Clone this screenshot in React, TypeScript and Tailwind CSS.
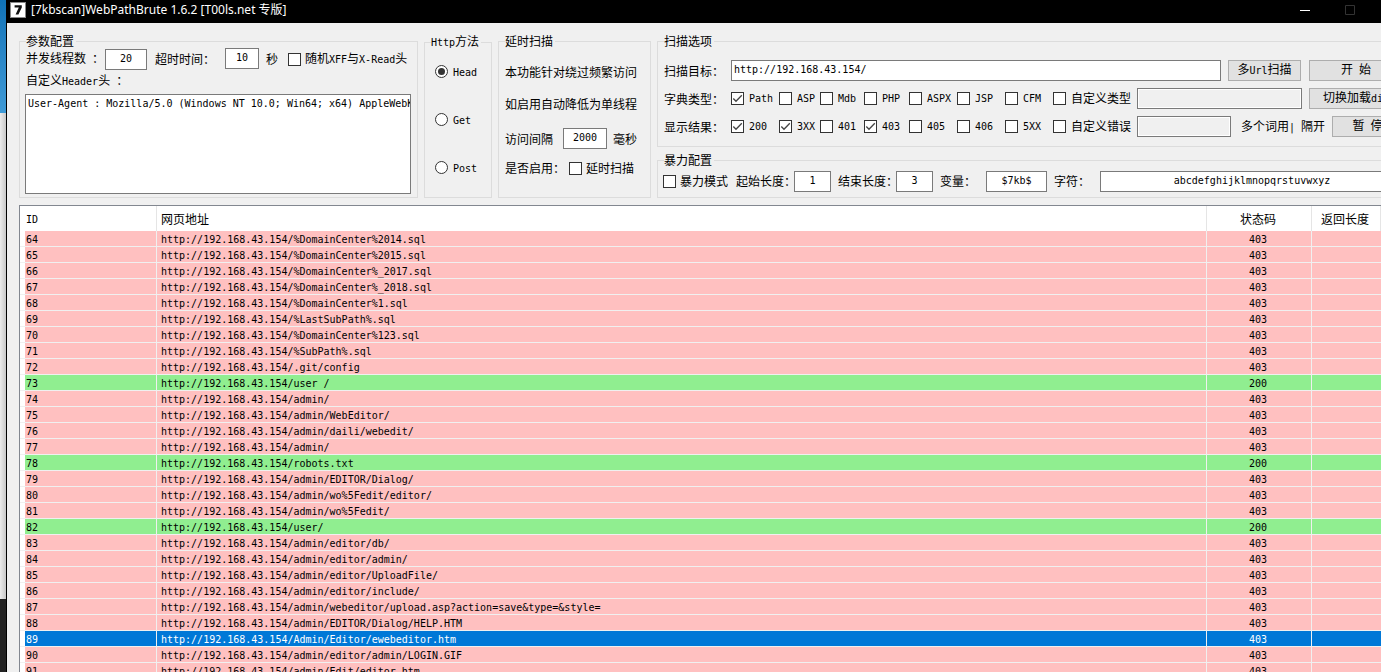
import React from "react";

const CJK = "font-['Noto_Sans_CJK_SC',sans-serif]";
const LATIN = "font-['DejaVu_Sans_Mono','Noto_Sans_CJK_SC',monospace] text-[10px]";

function Txt({ children }: { children: string }) {
  const runs = children.match(/[\x20-\x7e]+|[^\x20-\x7e]+/g) ?? [];
  return (
    <span className="whitespace-pre">
      {runs.map((run, i) =>
        /^[\x20-\x7e]/.test(run) ? (
          <span key={i} className={LATIN}>{run}</span>
        ) : (
          <React.Fragment key={i}>{run}</React.Fragment>
        ),
      )}
    </span>
  );
}

function Check({ label, checked = false, tight = false }: { label: string; checked?: boolean; tight?: boolean }) {
  return (
    <label className={tight ? "flex items-center gap-1" : "flex items-center gap-[5px]"}>
      <span className="grid shrink-0">
        <input
          type="checkbox"
          defaultChecked={checked}
          className="peer col-start-1 row-start-1 size-[13px] appearance-none border border-[#333333] bg-white"
        />
        <svg
          viewBox="0 0 13 13"
          className="pointer-events-none invisible col-start-1 row-start-1 size-[13px] peer-checked:visible"
        >
          <path d="M2.3 6.5 5 9.3 10.8 3.3" fill="none" stroke="#444" strokeWidth="1.3" />
        </svg>
      </span>
      <span className="pb-[2px]"><Txt>{label}</Txt></span>
    </label>
  );
}

function Method({ label, checked = false }: { label: string; checked?: boolean }) {
  return (
    <label className="flex h-4 items-center gap-[5px]">
      <span className="grid shrink-0">
        <input
          type="radio"
          name="method"
          defaultChecked={checked}
          className="peer col-start-1 row-start-1 size-[13px] appearance-none rounded-full border border-[#333333] bg-white"
        />
        <span className="pointer-events-none invisible col-start-1 row-start-1 size-[7px] place-self-center rounded-full bg-[#333333] peer-checked:visible" />
      </span>
      <Txt>{label}</Txt>
    </label>
  );
}

const FIELD = `h-[21px] min-w-0 shrink-0 border border-[#7a7a7a] bg-white pb-[2px] ${LATIN}`;
const BUTTON = "h-[21px] shrink-0 border border-[#adadad] bg-[#e1e1e1] pb-[2px]";
const GROUP = "min-w-0 border border-[#dcdcdc]";
const LEGEND = "pr-[2px] pb-[2px] leading-[11px]";

const BASE = "http://192.168.43.154/";
const results: [number, string, number][] = [
  [64, "%DomainCenter%2014.sql", 403],
  [65, "%DomainCenter%2015.sql", 403],
  [66, "%DomainCenter%_2017.sql", 403],
  [67, "%DomainCenter%_2018.sql", 403],
  [68, "%DomainCenter%1.sql", 403],
  [69, "%LastSubPath%.sql", 403],
  [70, "%DomainCenter%123.sql", 403],
  [71, "%SubPath%.sql", 403],
  [72, ".git/config", 403],
  [73, "user /", 200],
  [74, "admin/", 403],
  [75, "admin/WebEditor/", 403],
  [76, "admin/daili/webedit/", 403],
  [77, "admin/", 403],
  [78, "robots.txt", 200],
  [79, "admin/EDITOR/Dialog/", 403],
  [80, "admin/wo%5Fedit/editor/", 403],
  [81, "admin/wo%5Fedit/", 403],
  [82, "user/", 200],
  [83, "admin/editor/db/", 403],
  [84, "admin/editor/admin/", 403],
  [85, "admin/editor/UploadFile/", 403],
  [86, "admin/editor/include/", 403],
  [87, "admin/webeditor/upload.asp?action=save&type=&style=", 403],
  [88, "admin/EDITOR/Dialog/HELP.HTM", 403],
  [89, "Admin/Editor/ewebeditor.htm", 403],
  [90, "admin/editor/admin/LOGIN.GIF", 403],
  [91, "admin/Edit/editor.htm", 403],
];
const SELECTED = 89;

function rowTone(id: number, status: number) {
  if (id === SELECTED) return "bg-[#0078d7] text-white";
  return status === 200 ? "bg-[#90ee90]" : "bg-[#ffc0c0]";
}

function TitleBar() {
  return (
    <header className="flex h-[23px] items-center bg-black pl-[3px] text-white">
      <svg viewBox="0 0 16 16" className="mb-[3px] size-4 shrink-0">
        <rect x="0.5" y="0.5" width="15" height="15" fill="#fff" stroke="#888" />
        <path d="M4.6 3.2h7.2v2.2L8.4 12.6H5.6L8.8 5.6H4.6z" fill="#111" />
      </svg>
      <h1 className="ml-[5px] mb-[3px] flex-1 whitespace-nowrap font-['Noto_Sans','Noto_Sans_CJK_SC',sans-serif] text-[12px] leading-4">
        [7kbscan]WebPathBrute 1.6.2 [T00ls.net 专版]
      </h1>
      <button aria-label="最小化" className="mb-[3px] flex h-4 w-[45px] items-center justify-center">
        <svg viewBox="0 0 10 10" className="size-[10px]"><path d="M0 5.5h10" stroke="#fff" /></svg>
      </button>
      <button aria-label="最大化" className="mb-[3px] mr-[9px] flex h-4 w-[45px] items-center justify-center">
        <svg viewBox="0 0 10 10" className="size-[10px]"><path d="M.5.5h9v9h-9z" fill="none" stroke="#333" /></svg>
      </button>
    </header>
  );
}

function Parameters() {
  return (
    <fieldset className={`${GROUP} w-[399px] shrink-0 px-[5px]`}>
      <legend className={`${LEGEND} ml-px`}>参数配置</legend>
      <div className="flex h-[22px] items-center pl-px">
        <label htmlFor="threads" className="w-[79px] pb-[2px]"><Txt>并发线程数 ：</Txt></label>
        <input id="threads" defaultValue="20" className={`${FIELD} w-[42px] text-center`} />
        <label htmlFor="timeout" className="ml-2 w-[70px] pb-[2px]">超时时间：</label>
        <input id="timeout" defaultValue="10" className={`${FIELD} mb-[2px] w-[34px] text-center`} />
        <span className="mx-[7px] w-[15px] pb-[2px]">秒</span>
        <Check label="随机XFF与X-Read头" tight />
      </div>
      <label htmlFor="headers" className="mt-[3px] mb-[6px] block pl-px"><Txt>自定义Header头 ：</Txt></label>
      <textarea
        id="headers"
        wrap="off"
        defaultValue="User-Agent : Mozilla/5.0 (Windows NT 10.0; Win64; x64) AppleWebKit/537.36"
        className={`block h-[100px] w-[386px] resize-none overflow-hidden border border-[#7a7a7a] bg-white px-[2px] py-[2px] ${LATIN} leading-[13px]`}
      />
    </fieldset>
  );
}

function Methods() {
  return (
    <fieldset className={`${GROUP} w-[68px] shrink-0 pl-[6px]`}>
      <legend className={LEGEND}><Txt>Http方法</Txt></legend>
      <div className="flex flex-col gap-8 pt-[13px] pl-[4px]">
        <Method label="Head" checked />
        <Method label="Get" />
        <Method label="Post" />
      </div>
    </fieldset>
  );
}

function Delay() {
  return (
    <fieldset className={`${GROUP} w-[153px] shrink-0 pl-[6px]`}>
      <legend className={LEGEND}>延时扫描</legend>
      <div className="flex flex-col pt-[17px]">
        <p className="h-8 whitespace-nowrap">本功能针对绕过频繁访问</p>
        <p className="h-[31px] whitespace-nowrap">如启用自动降低为单线程</p>
        <div className="flex h-[21px] items-center">
          <label htmlFor="interval" className="w-[58px] pb-px">访问间隔</label>
          <input id="interval" defaultValue="2000" className={`${FIELD} w-11 text-center`} />
          <span className="ml-[6px] pb-px">毫秒</span>
        </div>
        <div className="mt-[11px] flex h-4 items-center">
          <span className="w-16 pb-[2px]">是否启用：</span>
          <Check label="延时扫描" tight />
        </div>
      </div>
    </fieldset>
  );
}

const OPTION_ROW = "mt-[6px] grid h-[22px] grid-cols-[67px_48px_41px_44px_45px_48px_48px_48px_84px_auto] items-center";

function ScanOptions() {
  return (
    <fieldset className={`${GROUP} pb-[9px] pl-[6px]`}>
      <legend className={LEGEND}>扫描选项</legend>
      <div className="mt-[11px] flex h-[22px] items-center">
        <label htmlFor="target" className="w-[67px] shrink-0">扫描目标：</label>
        <input id="target" defaultValue="http://192.168.43.154/" className={`${FIELD} w-[490px] px-[2px]`} />
        <button className={`${BUTTON} ml-[7px] w-[73px]`}><Txt>多Url扫描</Txt></button>
        <button className={`${BUTTON} ml-2 w-[94px]`}><Txt>开 始</Txt></button>
      </div>
      <div className={OPTION_ROW}>
        <span>字典类型：</span>
        <Check label="Path" checked />
        <Check label="ASP" />
        <Check label="Mdb" />
        <Check label="PHP" />
        <Check label="ASPX" />
        <Check label="JSP" />
        <Check label="CFM" />
        <Check label="自定义类型" />
        <div className="flex items-center">
          <input aria-label="自定义类型" disabled className={`${FIELD} w-[165px] bg-[#f0f0f0]! shadow-[inset_0_0_0_1px_#fff]`} />
          <button className={`${BUTTON} ml-[7px] w-[94px]`}><Txt>切换加载dic</Txt></button>
        </div>
      </div>
      <div className={OPTION_ROW}>
        <span>显示结果：</span>
        <Check label="200" checked />
        <Check label="3XX" checked />
        <Check label="401" />
        <Check label="403" checked />
        <Check label="405" />
        <Check label="406" />
        <Check label="5XX" />
        <Check label="自定义错误" />
        <div className="flex items-center">
          <input aria-label="自定义错误" disabled className={`${FIELD} w-[94px] bg-[#f0f0f0]! shadow-[inset_0_0_0_1px_#fff]`} />
          <span className="ml-[10px] w-[91px] shrink-0"><Txt>多个词用| 隔开</Txt></span>
          <button className={`${BUTTON} w-[71px]`}><Txt>暂 停</Txt></button>
        </div>
      </div>
    </fieldset>
  );
}

function BruteOptions() {
  return (
    <fieldset className={`${GROUP} pb-[5px] pl-[5px]`}>
      <legend className={`${LEGEND} ml-px`}>暴力配置</legend>
      <div className="mt-[3px] flex h-[22px] items-center">
        <Check label="暴力模式" tight />
        <label htmlFor="minlen" className="ml-2 w-[58px] shrink-0 pb-[2px] whitespace-nowrap">起始长度：</label>
        <input id="minlen" defaultValue="1" className={`${FIELD} w-[37px] text-center`} />
        <label htmlFor="maxlen" className="ml-[7px] w-[58px] shrink-0 pb-[2px] whitespace-nowrap">结束长度：</label>
        <input id="maxlen" defaultValue="3" className={`${FIELD} w-[37px] text-center`} />
        <label htmlFor="variable" className="ml-[7px] w-[46px] shrink-0 pb-[2px]">变量：</label>
        <input id="variable" defaultValue="$7kb$" className={`${FIELD} w-[61px] text-center`} />
        <label htmlFor="charset" className="ml-[7px] w-[46px] shrink-0 pb-[2px]">字符：</label>
        <input id="charset" defaultValue="abcdefghijklmnopqrstuvwxyz" className={`${FIELD} w-[304px] text-center`} />
      </div>
    </fieldset>
  );
}

function Results() {
  const head = "border-r border-[#e5e5e5] font-normal";
  const cell = "border-r border-b border-[#f0f0f0] pt-[2px]";
  return (
    <div className="mt-[7px] ml-3 min-h-0 flex-1 overflow-hidden border-t border-l border-[#828790] bg-white">
      <table className="w-full table-fixed border-separate border-spacing-0">
        <colgroup>
          <col className="w-[5px]" />
          <col className="w-[132px]" />
          <col />
          <col className="w-[105px]" />
          <col className="w-[69px]" />
        </colgroup>
        <thead>
          <tr className="h-[25px]">
            <td />
            <th className={`${head} pl-px text-left`}><Txt>ID</Txt></th>
            <th className={`${head} pl-[4px] text-left`}>网页地址</th>
            <th className={`${head} pr-[2px]`}>状态码</th>
            <th className={`${head} pr-[2px]`}>返回长度</th>
          </tr>
        </thead>
        <tbody className={LATIN}>
          {results.map(([id, path, status]) => (
            <tr key={id} className="h-4">
              <td className="border-b border-[#f0f0f0]" />
              <td className={`${cell} pl-px ${rowTone(id, status)}`}>{id}</td>
              <td className={`${cell} overflow-hidden pl-[4px] whitespace-nowrap ${rowTone(id, status)}`}>{BASE + path}</td>
              <td className={`${cell} pr-[2px] text-center ${rowTone(id, status)}`}>{status}</td>
              <td className={`border-b border-[#f0f0f0] ${rowTone(id, status)}`} />
            </tr>
          ))}
        </tbody>
      </table>
    </div>
  );
}

export default function App() {
  return (
    <div lang="zh-CN" className="flex h-screen overflow-hidden">
      <div className="flex w-[6px] shrink-0 flex-col">
        <div className="h-[113px] bg-linear-to-b from-[#0f73b8] to-[#3f9ad6]" />
        <div className="flex-1 bg-linear-to-r from-[#ececec] to-[#c8c8c8]" />
        <div className="h-[73px] bg-[#232323]" />
      </div>
      <main className={`flex min-w-0 flex-1 flex-col overflow-hidden border-l border-black bg-[#f0f0f0] text-[12px] leading-[13px] text-black ${CJK}`}>
        <TitleBar />
        <div className="flex gap-[6px] pt-3 pl-3">
          <Parameters />
          <Methods />
          <Delay />
          <div className="flex min-w-[756px] flex-1 flex-col gap-[7px]">
            <ScanOptions />
            <BruteOptions />
          </div>
        </div>
        <Results />
      </main>
    </div>
  );
}
